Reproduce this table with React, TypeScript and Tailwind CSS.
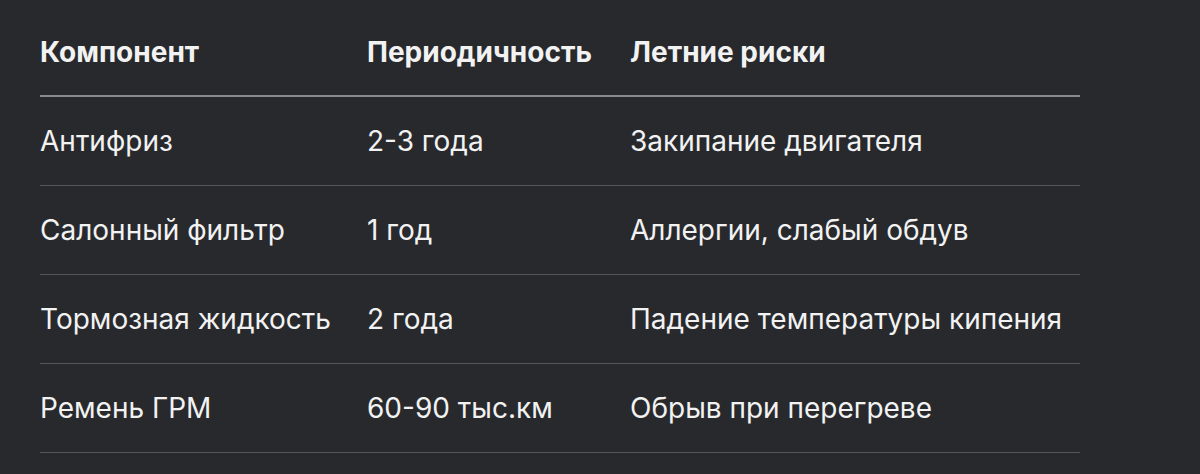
const rows = [
    ["Антифриз", "2-3 года", "Закипание двигателя"],
    ["Салонный фильтр", "1 год", "Аллергии, слабый обдув"],
    ["Тормозная жидкость", "2 года", "Падение температуры кипения"],
    ["Ремень ГРМ", "60-90 тыс.км", "Обрыв при перегреве"],
];

export default function App() {
    return (
        <div className="w-[1200px] h-[474px] bg-[#28292d] px-10 font-['Inter','Noto_Sans',sans-serif] text-[28px] text-[#f2f2f2] overflow-hidden">
            <table className="w-[1040px] table-fixed border-collapse">
                <colgroup>
                    <col className="w-[327px]" />
                    <col className="w-[263px]" />
                    <col />
                </colgroup>
                <thead>
                    <tr className="h-[96px] border-b-2 border-[#8a8a8c]">
                        <th className="text-left font-bold align-middle pt-2">Компонент</th>
                        <th className="text-left font-bold align-middle pt-2">Периодичность</th>
                        <th className="text-left font-bold align-middle pt-2">Летние риски</th>
                    </tr>
                </thead>
                <tbody>
                    {rows.map((r, i) => (
                        <tr key={i} className="h-[89px] border-b border-[#55565a]">
                            {r.map((c, j) => (
                                <td key={j} className="align-middle whitespace-nowrap">{c}</td>
                            ))}
                        </tr>
                    ))}
                </tbody>
            </table>
        </div>
    );
}
